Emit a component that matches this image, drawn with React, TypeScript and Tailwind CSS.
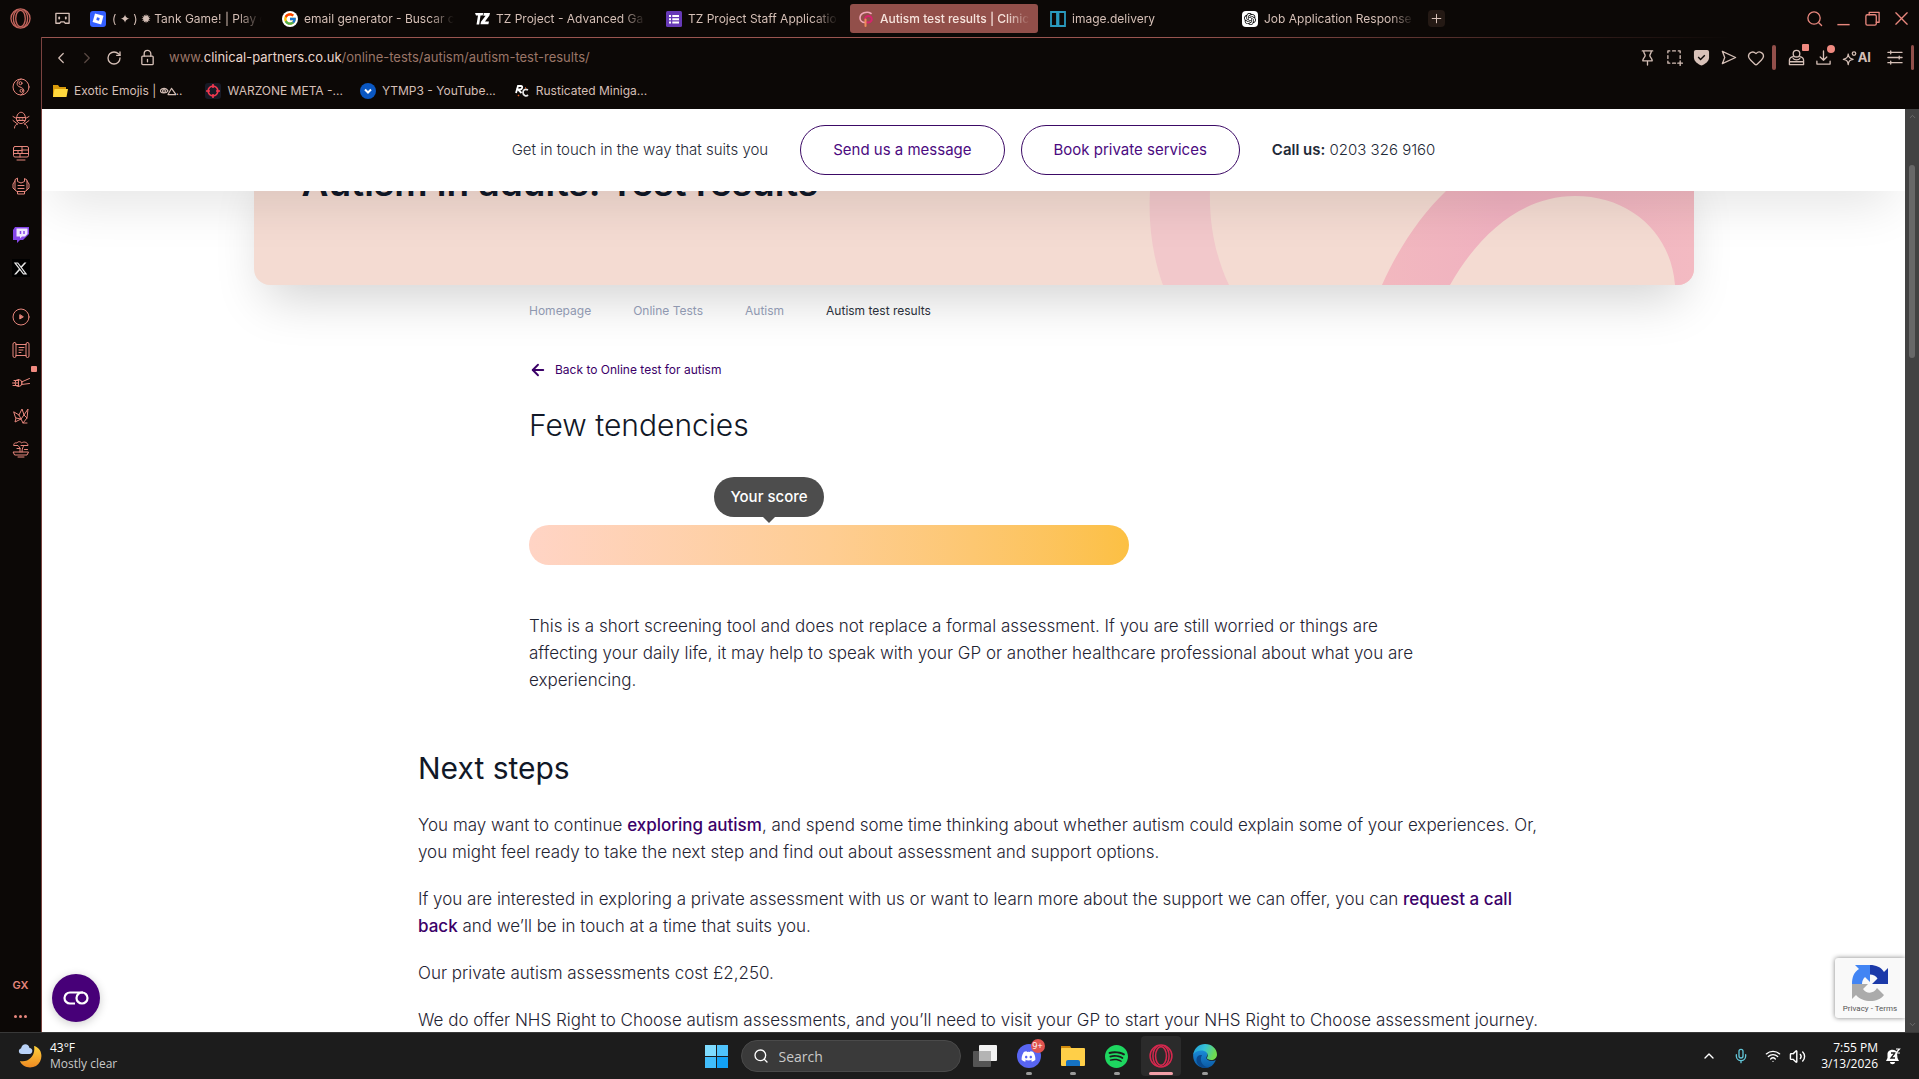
import React from "react";
import { Heart, Search, Wifi, Volume2, Mic, ChevronUp, ChevronDown, ChevronLeft, ChevronRight, RotateCw, ArrowLeft } from "lucide-react";
import { FcGoogle } from "react-icons/fc";
import { FaDiscord, FaTwitch, FaXTwitter } from "react-icons/fa6";
import { SiOpenai, SiSpotify } from "react-icons/si";

type Kids = { children?: React.ReactNode };

const Line = ({ size = 18, stroke = 1.4, children }: Kids & { size?: number; stroke?: number }) => (
  <svg width={size} height={size} viewBox="0 0 18 18" fill="none" stroke="currentColor" strokeWidth={stroke} strokeLinecap="round" strokeLinejoin="round" aria-hidden="true">
    {children}
  </svg>
);

const OperaIcon = ({ size = 22 }: { size?: number }) => (
  <svg width={size} height={size} viewBox="0 0 22 22" fill="none" stroke="currentColor" strokeWidth="1.4" aria-hidden="true">
    <circle cx="11" cy="11" r="10" />
    <ellipse cx="11" cy="11" rx="5" ry="8.6" />
    <path d="M8 1.8C4.5 4 3.6 7.500 3.600 11s.9 7 4.400 9.200M14 1.800C17.500 4 18.400 7.500 18.400 11s-.9 7-4.400 9.200" />
  </svg>
);

const tabs = [
  { title: "( ✦ ) ✹ Tank Game! | Play o", icon: "roblox" },
  { title: "email generator - Buscar c", icon: "google" },
  { title: "TZ Project - Advanced Ga", icon: "tz" },
  { title: "TZ Project Staff Applicatio", icon: "forms" },
  { title: "Autism test results | Clinica", icon: "clinical" },
  { title: "image.delivery", icon: "image" },
  { title: "Job Application Response", icon: "gpt" },
];

function Favicon({ name }: { name: string }) {
  if (name === "google")
    return <span className="flex size-4 items-center justify-center rounded-full bg-white"><FcGoogle size={14} /></span>;
  if (name === "gpt")
    return <span className="flex size-4 items-center justify-center rounded-sm bg-white text-black"><SiOpenai size={12} /></span>;
  return (
    <svg width="16" height="16" viewBox="0 0 16 16" aria-hidden="true">
      {name === "roblox" && (
        <>
          <rect width="16" height="16" rx="3" fill="#335fff" />
          <path d="M5 2.500 13.500 4.800 11.200 13.400 2.600 11.100Z" fill="#fff" />
          <path d="M7 6.300 9.700 7 9 9.700 6.300 9Z" fill="#335fff" />
        </>
      )}
      {name === "tz" && (
        <>
          <path d="M1 2h8.500l-1 2.600H6.500L5.200 13.500H2.500L4 4.600H2Z" fill="#fff" />
          <path d="M10 2h6l-.6 2.500-4.400 6H15l-.6 2.700H6.500l.5-2.500 4.600-6H9.300Z" fill="#fff" />
        </>
      )}
      {name === "forms" && (
        <>
          <rect width="16" height="16" rx="1.500" fill="#673ab7" />
          <path d="M3 4h2v2H3zM3 7.200h2v2H3zM3 10.400h2v2H3zM6.300 4H13v2H6.300zM6.300 7.200H13v2H6.300zM6.300 10.400H13v2H6.300z" fill="#fff" />
        </>
      )}
      {name === "clinical" && (
        <g fill="none" strokeLinecap="round">
          <path d="M13 2.500C9 -.2 2 2 2 7c0 2.500 2 4.500 5 4.500" stroke="#f2a7b8" strokeWidth="1.600" />
          <path d="M7 8c0-2 2-3.300 4-3 2.500.4 3.500 3 2.200 5-.9 1.400-2.700 1.800-4.200 1.300" stroke="#d6246e" strokeWidth="2" />
          <path d="M7.500 8.500V15" stroke="#f08a5a" strokeWidth="2" />
        </g>
      )}
      {name === "image" && <path d="M1 1h6v14H1ZM8.500 1H15v14H8.500Z" fill="none" stroke="#2a9bbf" strokeWidth="1.800" />}
    </svg>
  );
}

function TabStrip() {
  return (
    <header className="flex h-[37px] shrink-0 items-center bg-[#0c0806] text-[#d5bfb6]">
      <div className="flex w-[82px] shrink-0 items-center gap-[23px] pl-[10px]">
        <button aria-label="Opera menu" className="text-[#c4655d]"><OperaIcon size={21} /></button>
        <button aria-label="Workspace">
          <Line size={17}>
            <path d="M2 3.500h14v10.500h-4l-1.500-1.500h-3L6 14H2Z" />
            <path d="M5.500 8v1M12.500 8v1" strokeWidth="2" />
          </Line>
        </button>
      </div>
      <nav aria-label="Tabs" className="flex min-w-0 gap-1">
        {tabs.map((t) => {
          const active = t.icon === "clinical";
          return (
            <button
              key={t.icon}
              className={
                "flex h-[29px] w-[188px] min-w-0 items-center gap-[6px] rounded-[3px] px-2 text-left text-[12px] " +
                (active ? "bg-[#924f4a] font-medium text-[#f6e3dc]" : "")
              }
            >
              <span className="shrink-0"><Favicon name={t.icon} /></span>
              <span className="min-w-0 flex-1 overflow-hidden whitespace-nowrap [mask-image:linear-gradient(to_right,#000_calc(100%-24px),transparent)]">{t.title}</span>
            </button>
          );
        })}
      </nav>
      <button aria-label="New tab" className="ml-[6px] flex size-[17px] items-center justify-center rounded-sm bg-[#241914]">
        <Line size={13}><path d="M9 3v12M3 9h12" /></Line>
      </button>
      <div className="ml-auto flex items-center gap-[12px] pr-[9px] text-[#e8877d]">
        <button aria-label="Search tabs"><Line size={17}><circle cx="8.500" cy="8.500" r="6.500" /><path d="m13.500 13.500 3 3" /></Line></button>
        <button aria-label="Minimize"><Line size={17}><path d="M2.500 15.500h13" strokeWidth="1.500" strokeLinecap="butt" /></Line></button>
        <button aria-label="Restore"><Line size={17}><rect x="2" y="5" width="11" height="11" rx="1.500" /><path d="M5.500 5V2.500h10.500v10.500h-3" /></Line></button>
        <button aria-label="Close"><Line size={17}><path d="m3 3 12 12M15 3 3 15" /></Line></button>
      </div>
    </header>
  );
}

const sideTop = [
  { label: "Balance", body: <><circle cx="9" cy="9" r="8" /><path d="M9 1C4 3 4 8 8 9s6 5 1 8" /><circle cx="8.500" cy="5.200" r="1.500" /><circle cx="9.500" cy="12.800" r="1.500" /></> },
  { label: "Ninja", body: <><path d="M4.500 8c0-9 9-9 9 0 0 2.500-2 4.500-4.500 4.500S4.500 10.500 4.500 8Z" /><path d="M4.500 6.500h9M5 9.500h8M7 8h1M10 8h1M1 5.500l3.500 2M17 5.500l-3.500 2M1 9.500l4.500 3.500M17 9.500l-4.500 3.500M2.500 17c0-2 1-3.500 3-4M15.500 17c0-2-1-3.500-3-4" /></> },
  { label: "Bento", body: <><rect x="1.500" y="2.500" width="15" height="10.500" rx="1.500" /><path d="M1.500 6.500H10M6 6.500V9.500M10 2.500V9.500M10 6h6.500M1.500 9.500H16.500M8 9.500V13M5 16h8" /></> },
  { label: "Armour", body: <><path d="M5.500 1.500v3L9 6l3.500-1.500v-3L15 3v10l-2 1.500H5L3 13V3ZM3 4 1 7v4l2 2M15 4l2 3v4l-2 2M6 8.500h6M6 11.500h6M5.500 14.500V17h7v-2.500" /></> },
];
const sideBottom = [
  { label: "Player", body: <><circle cx="9" cy="9" r="8" /><path d="M7.800 7v4L11 9Z" fill="currentColor" /></> },
  { label: "Scroll", body: <><rect x="1" y="1.500" width="3" height="15" rx="1.500" /><rect x="14" y="1.500" width="3" height="15" rx="1.500" /><path d="M4 3.500h10M4 14.500h10M7 6.500h5M7 9h4M7 11.500h2" /></> },
  { label: "Sushi", dot: true, body: <><path d="M.5 9h6M9.500 8l8-3.500M9.500 10.500l8-1M1 11.500h5M2 6.500h4" /><circle cx="6.500" cy="9" r="3.500" /><path d="M6.500 5.500v7" /></> },
  { label: "Origami", body: <><path d="m2 5 5 3 2 4-5-1ZM7 8l3-6 2 6-3 4M12 8l4-6-1 9-4 5-2-4M4 11l-1 4 6-3M12 8l3 3M11 16l4 0" /></> },
  { label: "Bonsai", body: <><path d="M2 5.500c-1-2 1-3 3-2.500 1-2 4-1.500 4.500 0C12 1 16 2.500 16 5.500H9M2 5.500h4l2 2.500v4M5 8.500h3M12 5.500c-1 1.500-2 3-2 6.500M12.500 9.500h3M1.500 12h15l-1.500 3H3ZM6 17h6" /></> },
];

function SideBar() {
  return (
    <aside className="flex w-[42px] shrink-0 flex-col items-center border-r border-[#7a423f] bg-[#0c0806] pt-[41px] pb-[12px] text-[#e8877d]">
      <div className="flex flex-col gap-[15px]">
        {sideTop.map((i) => (
          <button key={i.label} aria-label={i.label}><Line stroke={1}>{i.body}</Line></button>
        ))}
      </div>
      <div className="mt-[31px] flex flex-col gap-[15px]">
        <button aria-label="Twitch" className="text-[#9a5cf0]">
          <svg width="18" height="18" viewBox="0 0 18 18" aria-hidden="true"><path d="m3 1-2 3v10h4v3l3-3h3l6-6V1Z" fill="#8445e8" /><path d="M4.500 2.500h11v5.500L13 10.500h-3L8 12.500v-2H4.500Z" fill="#efe6ff" /><path d="M8.500 5v3M12 5v3" stroke="#8445e8" strokeWidth="1.500" /></svg>
        </button>
        <button aria-label="X" className="flex size-[18px] items-center justify-center bg-black text-[#e6e6e6]"><FaXTwitter size={15} /></button>
      </div>
      <div className="mt-[31px] flex flex-col gap-[15px]">
        {sideBottom.map((i) => (
          <button key={i.label} aria-label={i.label} className="relative">
            <Line stroke={1}>{i.body}</Line>
            {i.dot && <span className="absolute -top-[8px] left-[19px] size-[6px] rounded-[1px] bg-[#f08a80]" />}
          </button>
        ))}
      </div>
      <button className="mt-auto text-[11px] leading-4 font-semibold">GX</button>
      <button aria-label="More" className="mt-[22px] flex gap-[2px] pb-[2px]">
        <span className="size-[3px] rounded-full bg-current" />
        <span className="size-[3px] rounded-full bg-current" />
        <span className="size-[3px] rounded-full bg-current" />
      </button>
    </aside>
  );
}

function AddressBar() {
  return (
    <div className="flex h-[39px] shrink-0 items-center pl-[10px] pr-[5px]">
      <div className="flex items-center gap-[8px]">
        <button aria-label="Back"><ChevronLeft size={18} strokeWidth={1.600} /></button>
        <button aria-label="Forward" className="text-[#5b4a44]"><ChevronRight size={18} strokeWidth={1.600} /></button>
        <button aria-label="Reload" className="pl-[2px]"><RotateCw size={16} strokeWidth={2} /></button>
      </div>
      <button aria-label="Site information" className="ml-[17px]">
        <Line size={17}><rect x="3" y="7.500" width="12" height="9" rx="1" /><path d="M5.500 7.500V5a3.500 3.500 0 0 1 7 0v2.500M9 11v2.500" /></Line>
      </button>
      <p className="ml-[13px] text-[13px] text-[#9b7668]">
        www.<span className="text-[#ead6cd]">clinical-partners.co.uk</span>/online-tests/autism/autism-test-results/
      </p>
      <div className="ml-auto flex items-center gap-[10px]">
        <button aria-label="Pin"><Line size={17}><path d="M3.500 2h11M5 2c0 3 1.500 3 1.500 5S4 9.500 4 12.500h10c0-3-2.500-3.500-2.500-5.500S13 5 13 2M9 12.500v4.500" /></Line></button>
        <button aria-label="Snapshot"><Line size={17}><path d="M2 4V2h2M7 2h3M13 2h2v2M15 7v3M2 7v3M2 13v2h2M7 15h3M15 12.500v5M12.500 15h5" /></Line></button>
        <button aria-label="Ad blocker">
          <svg width="17" height="17" viewBox="0 0 18 18" aria-hidden="true"><path d="M1 3Q1 1 3 1h12q2 0 2 2v6c0 4-4 7-8 8.500C5 16 1 13 1 9Z" fill="#d9c2b9" /><path d="m5.500 8.500 2.500 2.500 4.500-4.500" fill="none" stroke="#0c0806" strokeWidth="1.500" /></svg>
        </button>
        <button aria-label="Send"><Line size={17}><path d="M2.500 2.500 16.500 9 2.500 15.500 5 9Z" /></Line></button>
        <button aria-label="Favourite"><Heart size={18} strokeWidth={1.800} /></button>
      </div>
      <span className="ml-[7px] h-[25px] w-1 rounded-sm bg-[#924f4a]" />
      <div className="ml-[12px] flex items-center gap-[10px]">
        <button aria-label="Profile" className="relative">
          <Line size={17}><circle cx="9" cy="5" r="3.500" /><path d="M5.500 8C3 8.500 1.500 10 1.500 12v4.500h15V12c0-2-1.500-3.500-4-4M5.500 10c1 2 6 2 7 0M1.500 13.500h15" /></Line>
          <span className="absolute -top-[5px] left-[14px] size-[7px] rounded-[1px] bg-[#f08a80]" />
        </button>
        <button aria-label="Downloads" className="relative">
          <Line size={17}><path d="M9 2v10M5.500 8.500 9 12l3.500-3.500M2 13v3h14v-3" /></Line>
          <span className="absolute -top-[4px] left-[12px] size-[8px] rounded-full bg-[#f08a80]" />
        </button>
        <button aria-label="AI" className="flex items-center text-[13px] font-bold">
          <Line size={16}><path d="M7 4.500c.6 4 1.500 5 5.500 6-4 .8-4.900 2-5.500 6-.6-4-1.500-5.200-5.500-6 4-1 4.900-2 5.500-6Z" /><circle cx="13.500" cy="4" r="2" /></Line>AI
        </button>
        <button aria-label="Easy setup" className="ml-[5px]">
          <Line size={17}><path d="M2 3.500h15M2 9h15M2 14.500h15M5 2v3M14 7.500v3M5 13v3" /></Line>
        </button>
      </div>
      <span className="ml-[8px] h-[25px] w-[3px] rounded-sm bg-[#924f4a]" />
    </div>
  );
}

function Bookmarks() {
  return (
    <nav aria-label="Bookmarks" className="flex h-[32px] shrink-0 items-center pb-[5px] pl-[10px] text-[12px]">
      <a href="#" className="mr-[23px] flex items-center gap-[6px]">
        <svg width="16" height="16" viewBox="0 0 16 16" aria-hidden="true"><path d="M1 2h5l1.500 2H14v10H1Z" fill="#d99a0a" /><path d="M2.500 6H16l-1.500 8H1Z" fill="#ffd83d" /></svg>
        <span className="flex items-center">Exotic Emojis |&nbsp;
          <Line size={16} stroke={1.300}><path d="M0 9c2-4 7-4 9 0-2 3-7 3-9 0ZM9 13l4-7 5 7Z" /><circle cx="4.500" cy="9" r="1.600" /></Line>..
        </span>
      </a>
      <a href="#" className="mr-[17px] flex items-center gap-[6px]">
        <svg width="16" height="16" viewBox="0 0 16 16" aria-hidden="true"><rect width="16" height="16" rx="3" fill="#171a26" /><circle cx="8" cy="8" r="4.800" fill="none" stroke="#f0384f" strokeWidth="1.800" /><path d="M8 1v4M8 11v4M1 8h4M11 8h4" stroke="#f0384f" strokeWidth="1.600" /></svg>
        WARZONE META -...
      </a>
      <a href="#" className="mr-[18px] flex items-center gap-[6px]">
        <svg width="16" height="16" viewBox="0 0 16 16" aria-hidden="true"><circle cx="8" cy="8" r="8" fill="#0a57c2" /><path d="m5 6.500 3 3 3-3" fill="none" stroke="#fff" strokeWidth="2" /></svg>
        YTMP3 - YouTube...
      </a>
      <a href="#" className="flex items-center gap-[6px]">
        <svg width="16" height="16" viewBox="0 0 16 16" fill="none" aria-hidden="true"><path d="M2 10 4 3h3c2 0 1.500 3.500-1 3.500H4L7.500 10" stroke="#fff" strokeWidth="1.800" /><path d="M14 7c-3-1.500-5 0-5 2.500S12 14 14 12" stroke="#e8e8e8" strokeWidth="1.800" /><path d="m4 12 1 1M11 5h1" stroke="#e2622a" strokeWidth="1.600" /></svg>
        Rusticated Miniga...
      </a>
    </nav>
  );
}

function ContactBar() {
  return (
    <div className="relative z-10 flex h-[82px] shrink-0 items-center justify-center bg-white text-[15px] text-[#1f2a37] shadow-[0_25px_50px_-12px_rgba(0,0,0,0.11)]">
      <span className="mr-8 font-light">Get in touch in the way that suits you</span>
      <button className="mr-4 h-[50px] rounded-full border border-[#3c0a66] px-8 text-[#4b0a80]">Send us a message</button>
      <button className="mr-8 h-[50px] rounded-full border border-[#3c0a66] px-8 text-[#4b0a80]">Book private services</button>
      <span className="font-light"><b className="font-semibold">Call us:</b> 0203 326 9160</span>
    </div>
  );
}

function Hero() {
  return (
    <section className="mx-auto -mt-[36px] w-full max-w-[1440px] shrink-0 rounded-b-2xl bg-[#f4dbd2] shadow-[0_25px_50px_-12px_rgba(0,0,0,0.18)]">
      <div className="relative h-[130px] overflow-hidden rounded-b-2xl px-12">
        <svg className="absolute right-0 bottom-0" width="560" height="94" viewBox="1134 191 560 94" aria-hidden="true">
          <defs>
            <linearGradient id="ring" x1="0" x2="1"><stop offset="0" stopColor="#f2b8bf" /><stop offset=".4" stopColor="#f0b1c0" /><stop offset="1" stopColor="#f3bac2" /></linearGradient>
          </defs>
          <path d="M1150 191C1148 225 1153 258 1163 285H1229C1216 258 1209 225 1210 191Z" fill="#f2c8cb" />
          <path d="M1382 285C1398 249 1420 216 1446 191H1694V285H1675C1671 233 1630 196 1575 196 1525 196 1481 230 1450 285Z" fill="url(#ring)" />
        </svg>
        <h1 className="text-[37px] leading-[56px] font-semibold text-[#111827]">Autism in adults: Test results</h1>
      </div>
    </section>
  );
}

const bodyLink = "font-medium text-[#3b0068]";

function Page() {
  return (
    <main className="relative flex min-w-0 flex-1 flex-col overflow-hidden bg-white text-[#1f2433]">
      <ContactBar />
      <Hero />
      <div className="mx-auto w-full max-w-[889px] shrink-0">
        <nav aria-label="Breadcrumb" className="mt-4 flex gap-[42px] text-[12px] leading-5 text-[#8f98b0]">
          <a href="#">Homepage</a><a href="#">Online Tests</a><a href="#">Autism</a><span className="text-[#2b2f3a]">Autism test results</span>
        </nav>
        <a href="#" className="mt-[39px] flex items-center gap-2 text-[12px] leading-5 text-[#3b0068]"><ArrowLeft size={18} strokeWidth={2.500} />Back to Online test for autism</a>
        <h2 className="mt-[25px] text-[30px] leading-10 font-light text-[#111827]">Few tendencies</h2>
        <div className="mt-8 w-[600px] max-w-full">
          <div className="flex w-4/5 flex-col items-center">
            <span className="flex h-10 items-center rounded-full bg-[#4d4d4d] px-4 text-[15px] font-medium text-white">Your score</span>
            <span className="h-[6px] w-3 bg-[#4d4d4d] [clip-path:polygon(0_0,100%_0,50%_100%)]" />
          </div>
          <div className="mt-[2px] h-10 rounded-full bg-linear-to-r from-[#ffd4c5] via-[#fecd92] to-[#fcc043]" />
        </div>
        <p className="mt-12 text-[17px] leading-[27px] font-light">
          This is a short screening tool and does not replace a formal assessment. If you are still worried or things are affecting your daily life, it may help to speak with your GP or another healthcare professional about what you are experiencing.
        </p>
      </div>
      <article className="mx-auto mt-[54px] flex w-full max-w-[1141px] shrink-0 flex-col gap-5 pl-[15px] text-[17px] leading-[27px] font-light">
        <h2 className="mb-1 text-[30px] leading-10 font-normal text-[#111827]">Next steps</h2>
        <p>You may want to continue <a href="#" className={bodyLink}>exploring autism</a>, and spend some time thinking about whether autism could explain some of your experiences. Or, you might feel ready to take the next step and find out about assessment and support options.</p>
        <p>If you are interested in exploring a private assessment with us or want to learn more about the support we can offer, you can <a href="#" className={bodyLink}>request a call back</a> and we’ll be in touch at a time that suits you.</p>
        <p>Our private autism assessments cost £2,250.</p>
        <p>We do offer NHS Right to Choose autism assessments, and you’ll need to visit your GP to start your NHS Right to Choose assessment journey.</p>
      </article>
      <button aria-label="Cookie preferences" className="absolute bottom-[10px] left-[10px] flex size-12 items-center justify-center rounded-full bg-[#470078] text-white shadow-[0_2px_10px_rgba(0,0,0,0.2)]">
        <svg width="26" height="14" viewBox="0 0 26 14" fill="none" stroke="currentColor" strokeWidth="2.200" aria-hidden="true"><path d="M20 1.500H7a5.500 5.500 0 0 0 0 11h5" /><circle cx="19" cy="7" r="5.500" /></svg>
      </button>
      <div className="absolute right-0 bottom-[14px] flex h-[60px] w-[70px] flex-col items-center rounded-l-[3px] bg-[#f9f9f9] pt-[6px] shadow-[0_0_5px_gray]">
        <svg width="38" height="38" viewBox="0 0 38 38" aria-hidden="true">
          <path d="M19 1C25 1 30 3 33 8L37 4V20H21L26.500 14.500C25 12 22 10.500 19 10.500Z" fill="#1c3aa9" />
          <path d="M19 1H4L8 5C3 8 1 13 1 20H11C11 17 12 15 14 13L19 18Z" fill="#4285f4" />
          <path d="M1 20H17L12 25C15 30 23 30 26 24L33 31C27 39 12 39 5 31L1 35Z" fill="#ababab" />
        </svg>
        <span className="text-[8px] leading-[14px] whitespace-nowrap text-[#555] [font-family:Roboto,sans-serif]"><a href="#">Privacy</a> - <a href="#">Terms</a></span>
      </div>
    </main>
  );
}

function Scrollbar() {
  return (
    <div className="flex w-[14px] shrink-0 flex-col items-center bg-[#424242] py-[3px] text-[#777]">
      <ChevronUp size={9} />
      <span className="mt-[44px] h-[193px] w-[6px] rounded-full bg-[#686868]" />
      <ChevronDown size={9} className="mt-auto" />
    </div>
  );
}

const Running = ({ children, active }: Kids & { active?: boolean }) => (
  <span className={"relative flex h-10 w-10 items-center justify-center rounded " + (active ? "bg-[#2b2b2b] text-[#d5284e]" : "")}>
    {children}
    <span className={"absolute bottom-[1px] h-[3px] rounded-full " + (active ? "w-6 bg-[#f2a0a8]" : "w-[6px] bg-[#9a9a9a]")} />
  </span>
);

function Taskbar() {
  return (
    <footer className="grid h-[47px] shrink-0 grid-cols-[1fr_auto_1fr] items-center border-t border-[#383838] bg-[#1c1c1c] text-[12px] text-white [font-family:'Open_Sans','Noto_Sans',sans-serif]">
      <button aria-label="Weather" className="flex items-center gap-2 pl-[18px] text-left leading-4">
        <svg width="24" height="26" viewBox="0 0 24 26" aria-hidden="true">
          <defs><linearGradient id="moon" x2="0" y2="1"><stop stopColor="#ffd23c" /><stop offset="1" stopColor="#ee8a22" /></linearGradient></defs>
          <path d="M16 3c9 2 10 15 2 20-6 3-14 1-16-5 8 2 16-5 14-15Z" fill="url(#moon)" />
          <path d="M4 11c-4 0-4-5-1-5.500C4-.5 11 0 11.500 5c4 0 3.500 6 0 6Z" fill="#b9d2f7" />
        </svg>
        <span>43°F<br /><span className="text-[#c9c9c9]">Mostly clear</span></span>
      </button>
      <div className="flex items-center pl-[10px]">
        <button aria-label="Start" className="grid grid-cols-2 gap-[1px]">
          <span className="size-[11px] bg-[#7fdcff]" /><span className="size-[11px] bg-[#4fc3fb]" /><span className="size-[11px] bg-[#41bdfb]" /><span className="size-[11px] bg-[#12a1f5]" />
        </button>
        <label className="ml-[13px] flex h-8 w-[220px] items-center gap-[10px] rounded-full border border-[#4a4a4a] bg-[#3a3a3a] px-[11px]">
          <Search size={16} className="shrink-0" />
          <input aria-label="Search" placeholder="Search" className="w-full min-w-0 bg-transparent text-[14px] outline-none placeholder:text-[#c9c9c9]" />
        </label>
        <button aria-label="Task view" className="ml-[12px]">
          <svg width="24" height="24" viewBox="0 0 24 24" aria-hidden="true"><rect x="6" y="1" width="18" height="16" rx="1" fill="#f2f2f2" /><rect y="7" width="18" height="16" rx="1" fill="#555" /><path d="M6 7h12v10H6Z" fill="#b4b4b4" /></svg>
        </button>
        <div className="ml-[12px] flex gap-1">
          <button aria-label="Discord"><Running>
            <span className="flex size-6 items-center justify-center rounded-full bg-[#5865f2]"><FaDiscord size={15} /></span>
            <span className="absolute top-[3px] left-[22px] flex size-[14px] items-center justify-center rounded-full bg-[#e0534f] text-[9px]">9+</span>
          </Running></button>
          <button aria-label="File Explorer"><Running>
            <svg width="24" height="22" viewBox="0 0 24 22" aria-hidden="true"><path d="M0 1h9l2 3H0Z" fill="#d18a0c" /><rect y="3" width="24" height="18" rx="1" fill="#ffcf48" /><path d="M5 21v-4q0-2 2-2h10q2 0 2 2v4Z" fill="#1673c4" /></svg>
          </Running></button>
          <button aria-label="Spotify"><Running><SiSpotify size={23} color="#1ed760" /></Running></button>
          <button aria-label="Opera GX"><Running active><OperaIcon size={24} /></Running></button>
          <button aria-label="Edge"><Running>
            <svg width="24" height="24" viewBox="0 0 24 24" aria-hidden="true">
              <defs>
                <linearGradient id="edgeTop" x1="0" x2="1" y2=".3"><stop stopColor="#1d9ad6" /><stop offset=".5" stopColor="#35c1d8" /><stop offset="1" stopColor="#6fdc4f" /></linearGradient>
                <linearGradient id="edgeBase" x2="0" y2="1"><stop stopColor="#1b8fdc" /><stop offset="1" stopColor="#0c59a4" /></linearGradient>
              </defs>
              <path d="M.2 10.500C2 3 14 3 14.500 10c.2 2-1.500 3-1 4.500 1 2.500 6 3 9.300 1.500C21 21 17 24 12 24 5 24-.5 18 .2 10.500Z" fill="url(#edgeBase)" />
              <path d="M9 11c-3 5 0 12 7 12.300-2 .7-4 .7-4 .7-6-.5-9-5-8.500-9C4 12 6 10.500 9 11Z" fill="#0a4a8e" />
              <path d="M.2 10.500C1.500 4 6 0 12 0c7 0 12 5 12 10.500 0 5-5.500 7-9.500 4.500-1.500-1 .5-2 .2-4C14 5.500 4 5 .2 10.500Z" fill="url(#edgeTop)" />
            </svg>
          </Running></button>
        </div>
      </div>
      <div className="flex items-center justify-end pr-[18px]">
        <button aria-label="Show hidden icons"><ChevronUp size={16} /></button>
        <button aria-label="Microphone" className="ml-[16px] text-[#62c4d6]"><Mic size={16} /></button>
        <button aria-label="Network" className="ml-[16px]"><Wifi size={16} /></button>
        <button aria-label="Volume" className="ml-[8px]"><Volume2 size={17} /></button>
        <button className="ml-[15px] text-right leading-4">7:55 PM<br />3/13/2026</button>
        <button aria-label="Notifications" className="ml-[7px]">
          <svg width="16" height="17" viewBox="0 0 16 17" aria-hidden="true"><path d="M1 13 2.500 10V6C2.500 1 11 0 12 5l.5 5 1.500 3ZM5 14h5c0 3-5 3-5 0Z" fill="#fff" /><path d="M6 5h4L6 10h4" fill="none" stroke="#1c1c1c" strokeWidth="1.300" /><path d="M11 1h3.500L11 5h4" fill="none" stroke="#fff" strokeWidth="1.200" /></svg>
        </button>
      </div>
    </footer>
  );
}

export default function App() {
  return (
    <div className="flex h-screen flex-col overflow-hidden bg-[#0c0806] [font-family:Inter,sans-serif]">
      <TabStrip />
      <div className="flex min-h-0 flex-1">
        <SideBar />
        <div className="flex min-w-0 flex-1 flex-col text-[#d5bfb6]">
          <div className="h-px shrink-0 bg-linear-to-r from-[#9a5550] from-60% to-transparent to-90%" />
          <AddressBar />
          <Bookmarks />
          <div className="flex min-h-0 flex-1">
            <Page />
            <Scrollbar />
          </div>
        </div>
      </div>
      <Taskbar />
    </div>
  );
}
